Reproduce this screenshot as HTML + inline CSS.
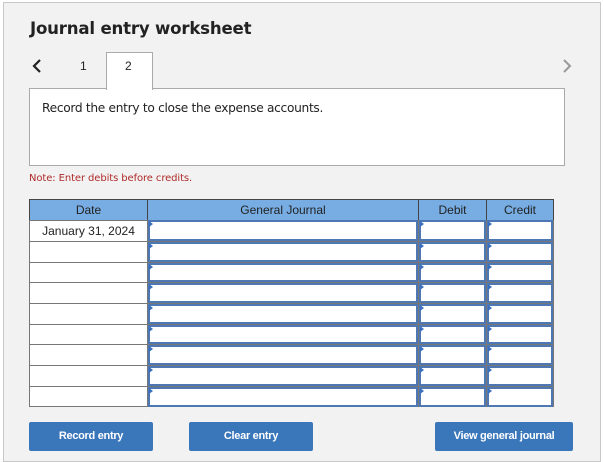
<!DOCTYPE html><html><head><style>
*{margin:0;padding:0;box-sizing:border-box}
body{width:604px;height:458px;background:#fff;position:relative;overflow:hidden;font-family:"DejaVu Sans",sans-serif}
.a{position:absolute}
.panel{left:3px;top:2px;width:598px;height:460px;background:#f2f2f2;border:1px solid #c8c8c8}
.t{left:30px;top:19px;font-size:16.6px;font-weight:bold;color:#222;letter-spacing:-0.2px}
.btn{position:absolute;top:422px;height:29px;background:#3a76ba;border-radius:2px;color:#fff;font:bold 11px "Liberation Sans",sans-serif;text-align:center;line-height:29px;letter-spacing:-0.3px}
.c{position:absolute;background:#fff;border:2px solid #4d78b3}
.c::before{content:"";position:absolute;left:-1px;top:-1px;border-left:4px solid #3a6fc0;border-top:3px solid transparent;border-bottom:3px solid transparent}
.d{position:absolute;left:29px;width:119px;background:#fff;border:1px solid #777;border-bottom:none}
.h{position:absolute;top:199px;height:22px;background:#77ade3;border:1px solid #444;font:12px "Liberation Sans",sans-serif;color:#222;text-align:center;line-height:20px}
</style></head><body>
<div class="a panel"></div>
<div class="a t">Journal entry worksheet</div>
<svg class="a" style="left:31px;top:59px" width="12" height="14"><path d="M9 1 L3 7 L9 13" stroke="#222" stroke-width="2.2" fill="none"/></svg>
<div class="a" style="left:80px;top:59px;font:12px 'Liberation Sans',sans-serif;color:#222">1</div>
<div class="a" style="left:106px;top:52px;width:47px;height:38px;background:#fff;border:1px solid #aaa;border-bottom:none;z-index:2"></div>
<div class="a" style="left:125px;top:59px;font:12px 'Liberation Sans',sans-serif;color:#222;z-index:3">2</div>
<svg class="a" style="left:561px;top:58px" width="12" height="16"><path d="M3 2 L9 8 L3 14" stroke="#999" stroke-width="2" fill="none"/></svg>
<div class="a" style="left:29px;top:88px;width:536px;height:78px;background:#fff;border:1px solid #aaa"></div>
<div class="a" style="left:42px;top:101px;font-size:12.2px;color:#222;letter-spacing:-0.3px;z-index:3">Record the entry to close the expense accounts.</div>
<div class="a" style="left:29px;top:173px;font-size:10px;color:#b02a2a;letter-spacing:-0.1px">Note: Enter debits before credits.</div>

<div class="h" style="left:29px;width:119px">Date</div>
<div class="h" style="left:147px;width:272px">General Journal</div>
<div class="h" style="left:418px;width:69px">Debit</div>
<div class="h" style="left:486px;width:68px">Credit</div>

<div class="d" style="top:220px;height:21px;font:12px 'Liberation Sans',sans-serif;color:#222;text-align:center;line-height:21px">January 31, 2024</div>
<div class="d" style="top:241px;height:21px"></div>
<div class="d" style="top:262px;height:20px"></div>
<div class="d" style="top:282px;height:21px"></div>
<div class="d" style="top:303px;height:21px"></div>
<div class="d" style="top:324px;height:20px"></div>
<div class="d" style="top:344px;height:21px"></div>
<div class="d" style="top:365px;height:21px"></div>
<div class="d" style="top:386px;height:21px;border-bottom:1px solid #777"></div>
<div class="a" style="left:147px;top:220px;width:407px;height:187px;background:#777"></div>

<div class="c" style="left:148px;top:220px;width:270px;height:21px"></div><div class="c" style="left:419px;top:220px;width:67px;height:21px"></div><div class="c" style="left:487px;top:220px;width:66px;height:21px"></div>
<div class="c" style="left:148px;top:242px;width:270px;height:20px"></div><div class="c" style="left:419px;top:242px;width:67px;height:20px"></div><div class="c" style="left:487px;top:242px;width:66px;height:20px"></div>
<div class="c" style="left:148px;top:263px;width:270px;height:19px"></div><div class="c" style="left:419px;top:263px;width:67px;height:19px"></div><div class="c" style="left:487px;top:263px;width:66px;height:19px"></div>
<div class="c" style="left:148px;top:283px;width:270px;height:20px"></div><div class="c" style="left:419px;top:283px;width:67px;height:20px"></div><div class="c" style="left:487px;top:283px;width:66px;height:20px"></div>
<div class="c" style="left:148px;top:304px;width:270px;height:20px"></div><div class="c" style="left:419px;top:304px;width:67px;height:20px"></div><div class="c" style="left:487px;top:304px;width:66px;height:20px"></div>
<div class="c" style="left:148px;top:325px;width:270px;height:19px"></div><div class="c" style="left:419px;top:325px;width:67px;height:19px"></div><div class="c" style="left:487px;top:325px;width:66px;height:19px"></div>
<div class="c" style="left:148px;top:345px;width:270px;height:20px"></div><div class="c" style="left:419px;top:345px;width:67px;height:20px"></div><div class="c" style="left:487px;top:345px;width:66px;height:20px"></div>
<div class="c" style="left:148px;top:366px;width:270px;height:20px"></div><div class="c" style="left:419px;top:366px;width:67px;height:20px"></div><div class="c" style="left:487px;top:366px;width:66px;height:20px"></div>
<div class="c" style="left:148px;top:387px;width:270px;height:20px"></div><div class="c" style="left:419px;top:387px;width:67px;height:20px"></div><div class="c" style="left:487px;top:387px;width:66px;height:20px"></div>

<div class="btn" style="left:29px;width:124px">Record entry</div>
<div class="btn" style="left:189px;width:124px">Clear entry</div>
<div class="btn" style="left:435px;width:138px">View general journal</div>
</body></html>
